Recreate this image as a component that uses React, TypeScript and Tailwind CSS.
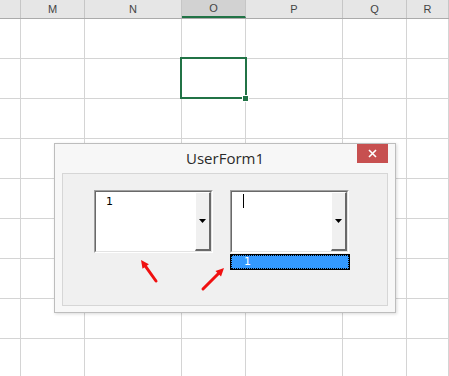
const cols = [
  { label: '', w: 'w-[21px]' },
  { label: 'M', w: 'w-[64px]' },
  { label: 'N', w: 'w-[97px]' },
  { label: 'O', w: 'w-[64px]', active: true },
  { label: 'P', w: 'w-[97px]' },
  { label: 'Q', w: 'w-[64px]' },
  { label: 'R', w: 'flex-1' },
];

function Arrow({ x1, y1, x2, y2 }: { x1: number; y1: number; x2: number; y2: number }) {
  const a = Math.atan2(y2 - y1, x2 - x1);
  const len = 9;
  const spread = 0.45;
  const p1 = [x2 - len * Math.cos(a - spread), y2 - len * Math.sin(a - spread)];
  const p2 = [x2 - len * Math.cos(a + spread), y2 - len * Math.sin(a + spread)];
  const bx = x2 - 6 * Math.cos(a);
  const by = y2 - 6 * Math.sin(a);
  return (
    <g>
      <line x1={x1} y1={y1} x2={bx} y2={by} stroke="#f01010" strokeWidth="3" strokeLinecap="round" />
      <polygon points={`${x2},${y2} ${p1[0]},${p1[1]} ${p2[0]},${p2[1]}`} fill="#f01010" />
    </g>
  );
}

function DropButton() {
  return (
    <div className="w-[16px] h-full bg-[#f0f0f0] border-t border-l border-t-white border-l-white border-b-2 border-r-2 border-b-[#696969] border-r-[#696969] flex items-center justify-center">
      <svg width="7" height="4" viewBox="0 0 7 4">
        <polygon points="0,0 7,0 3.5,4" fill="#000" />
      </svg>
    </div>
  );
}

function Combo({ children }: { children?: React.ReactNode }) {
  return (
    <div className="w-[119px] h-[63px] border-t border-l border-t-[#a0a0a0] border-l-[#a0a0a0] border-b border-r border-b-white border-r-white">
      <div className="h-full flex bg-white border-t border-l border-t-[#696969] border-l-[#696969] border-b border-r border-b-[#e3e3e3] border-r-[#e3e3e3]">
        <div className="flex-1 pl-[10px] pt-[3px] text-[11px] leading-[13px] text-black font-['DejaVu_Sans',sans-serif]">
          {children}
        </div>
        <DropButton />
      </div>
    </div>
  );
}

export default function App() {
  const rows = Array.from({ length: 9 });
  return (
    <div className="relative w-[449px] h-[376px] overflow-hidden bg-white font-['Liberation_Sans',sans-serif]">
      {/* column headers */}
      <div className="flex h-[19px] bg-[#e6e6e6] border-b border-[#ababab]">
        {cols.map((c, i) => (
          <div
            key={i}
            className={`${c.w} shrink-0 flex items-center justify-center text-[11px] text-[#444] border-r border-[#c6c6c6] ${
              c.active ? 'bg-[#d2d2d2] border-b-2 border-b-[#217346] text-[#222]' : ''
            }`}
          >
            {c.label}
          </div>
        ))}
      </div>

      {/* cells */}
      {rows.map((_, r) => (
        <div key={r} className="flex h-[40px] border-b border-[#d4d4d4]">
          {cols.map((c, i) => (
            <div key={i} className={`${c.w} shrink-0 border-r border-[#d4d4d4]`} />
          ))}
        </div>
      ))}

      {/* active cell */}
      <div className="absolute left-[180px] top-[57px] w-[67px] h-[42px] border-2 border-[#217346]" />
      <div className="absolute left-[243px] top-[96px] w-[5px] h-[5px] bg-[#217346] outline outline-1 outline-white" />

      {/* UserForm */}
      <div className="absolute left-[54px] top-[143px] w-[342px] h-[170px] bg-[#f7f7f7] border border-[#bdbdbd] shadow-[1px_1px_3px_rgba(0,0,0,0.15)] flex flex-col">
        <div className="relative h-[29px] flex items-center justify-center text-[15px] text-[#2b2b2b] font-['Open_Sans',sans-serif]">
          UserForm1
          <div className="absolute right-[7px] top-0 w-[31px] h-[19px] bg-[#c75050] flex items-center justify-center">
            <svg width="9" height="9" viewBox="0 0 9 9">
              <path d="M1 1 L8 8 M8 1 L1 8" stroke="#fff" strokeWidth="1.6" />
            </svg>
          </div>
        </div>
        <div className="mx-[7px] mb-[6px] flex-1 bg-[#f0f0f0] border border-[#d6d6d6] flex gap-[17px] pl-[31px] pt-[16px]">
          <Combo>1</Combo>
          <div className="flex flex-col gap-[1px]">
            <Combo>
              <div className="w-px h-[14px] bg-black ml-[1px] -mt-[1px]" />
            </Combo>
            <div className="w-[120px] h-[16px] bg-[#3399ff] border border-black">
              <div className="h-full border border-dotted border-black text-white text-[11px] leading-[12px] pl-[12px] font-['DejaVu_Sans',sans-serif]">
                1
              </div>
            </div>
          </div>
        </div>
      </div>

      {/* annotations */}
      <svg className="absolute left-0 top-0" width="449" height="376">
        <Arrow x1={156} y1={281} x2={141} y2={260} />
        <Arrow x1={203} y1={289} x2={224} y2={268} />
      </svg>
    </div>
  );
}
